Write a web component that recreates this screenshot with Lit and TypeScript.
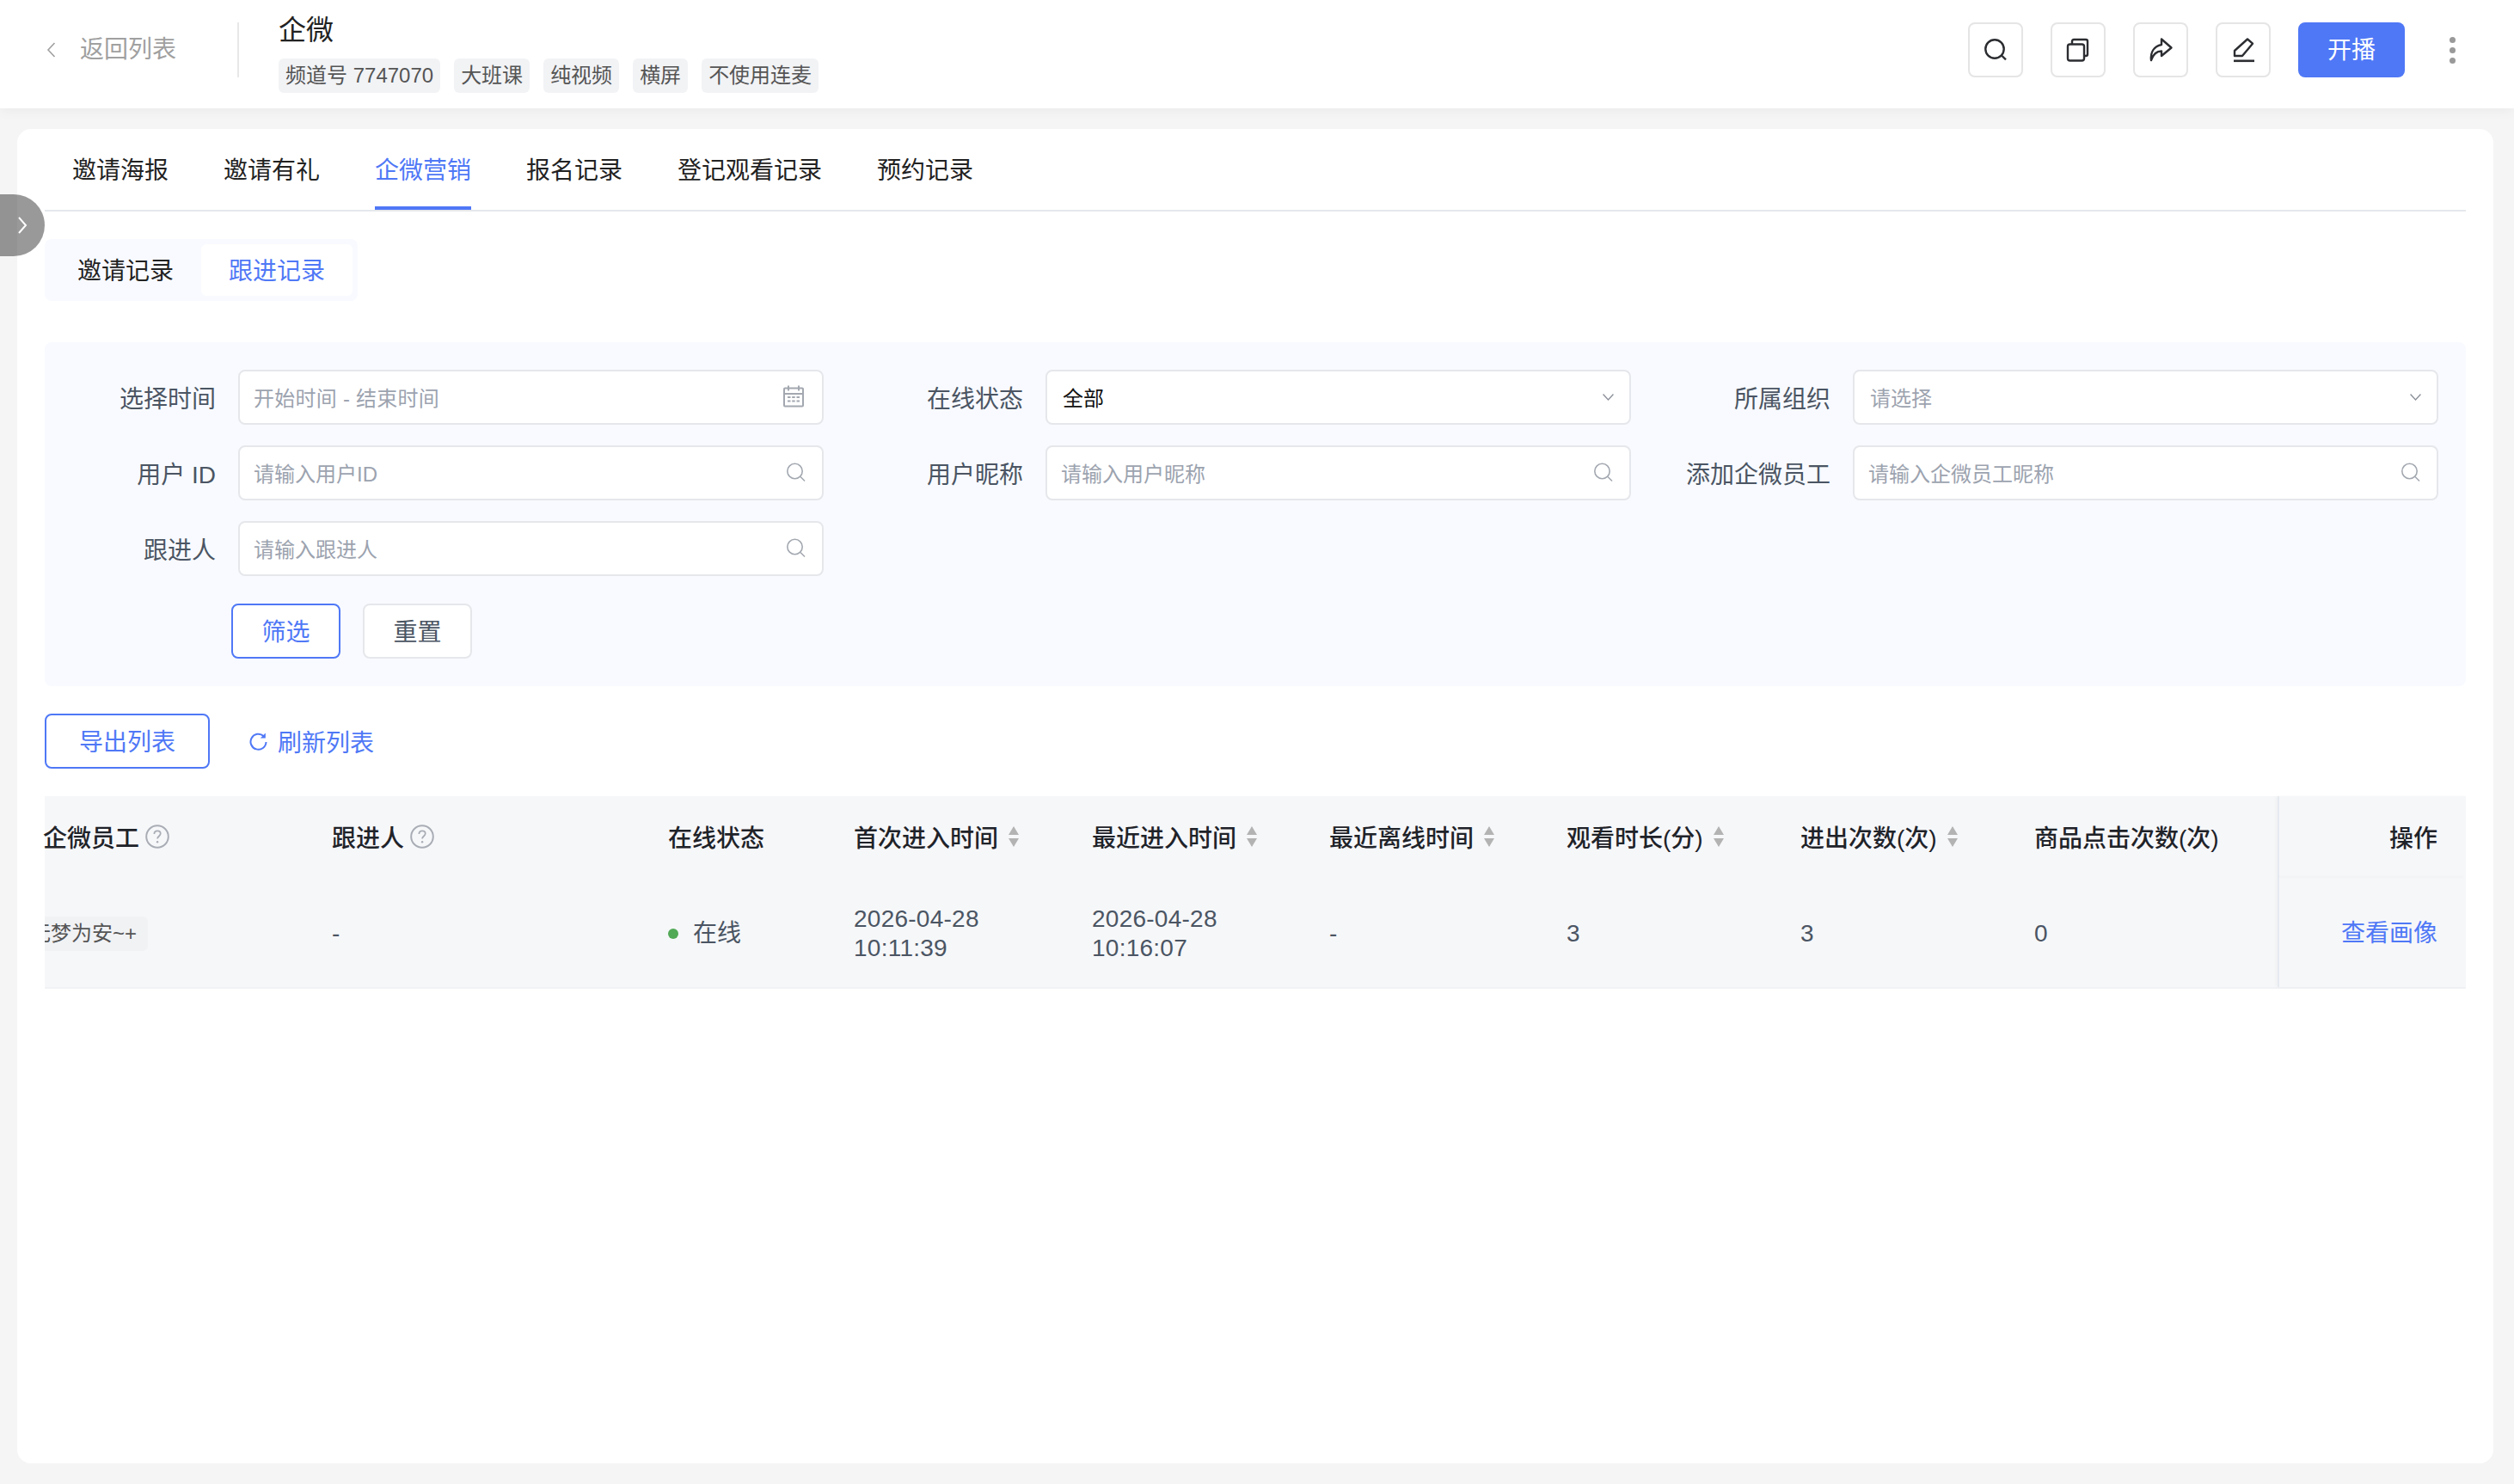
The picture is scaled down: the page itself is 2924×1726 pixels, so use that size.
import { css, html, LitElement, svg } from "lit";
import { customElement } from "lit/decorators.js";

const searchIcon = html`<svg class="field-icon" viewBox="0 0 24 24" fill="none" stroke="#a3a8b0" stroke-width="1.6"><circle cx="10.5" cy="11" r="8.7"></circle><path d="M17 17.5l5 5"></path></svg>`;
const chevronDown = html`<svg class="chevron" viewBox="0 0 20 20" fill="none" stroke="#8b9099" stroke-width="1.6"><path d="M3 6.5l7 7.5 7-7.5"></path></svg>`;
const calendarIcon = html`<svg class="field-icon date-icon" viewBox="0 0 24 26" fill="none" stroke="#a3a8b0" stroke-width="2"><rect x="1" y="3.5" width="22" height="21" rx="1"></rect><path d="M1 10h22M6 0.5v6M18 0.5v6"></path><path d="M5 14h3.5M10.2 14h3.5M15.5 14h3.5M5 18.5h3.5M10.2 18.5h3.5M15.5 18.5h3.5" stroke-width="1.8"></path></svg>`;
const helpIcon = html`<svg class="help" viewBox="0 0 28 28" fill="none"><circle cx="14" cy="14" r="12.8" stroke="#a9adb5" stroke-width="2"></circle><path d="M10.4 11c0-2.2 1.6-3.6 3.7-3.6s3.6 1.3 3.6 3.2c0 2.9-3.6 2.9-3.6 6" stroke="#a9adb5" stroke-width="1.8"></path><circle cx="14.1" cy="20.2" r="1.2" fill="#a9adb5"></circle></svg>`;
const sortIcon = html`<svg class="sort" viewBox="0 0 14 24" fill="#b3b3b3"><path d="M7 0l6 10H1zM7 24L1 14h12z"></path></svg>`;

const toolIcons = [
  svg`<circle cx="14" cy="14" r="10.7"></circle><path d="M22 21.5l5 4.8"></path>`,
  svg`<rect x="3" y="8.5" width="19" height="19" rx="2.5"></rect><path d="M8 8V5a2 2 0 0 1 2-2h14a2 2 0 0 1 2 2v15a2 2 0 0 1-2 2h-2"></path>`,
  svg`<path d="M4 27C3 18 7 11 16 9V2.5L27.5 12.5 16 22V16.5C10 16.5 6 21 4 27z" stroke-linejoin="round"></path>`,
  svg`<path d="M20 2.5l6 5.2L14 22H5v-6z" stroke-linejoin="round"></path><path d="M4 27.8h24" stroke-width="2.6"></path>`,
];

type Field = { label: string; placeholder?: string; value?: string; kind: "date" | "select" | "search" };

const fields: Field[] = [
  { label: "选择时间", placeholder: "开始时间 - 结束时间", kind: "date" },
  { label: "在线状态", value: "全部", kind: "select" },
  { label: "所属组织", placeholder: "请选择", kind: "select" },
  { label: "用户 ID", placeholder: "请输入用户ID", kind: "search" },
  { label: "用户昵称", placeholder: "请输入用户昵称", kind: "search" },
  { label: "添加企微员工", placeholder: "请输入企微员工昵称", kind: "search" },
  { label: "跟进人", placeholder: "请输入跟进人", kind: "search" },
];

const columns = [
  { title: "企微员工", help: true },
  { title: "跟进人", help: true },
  { title: "在线状态" },
  { title: "首次进入时间", sort: true },
  { title: "最近进入时间", sort: true },
  { title: "最近离线时间", sort: true },
  { title: "观看时长(分)", sort: true },
  { title: "进出次数(次)", sort: true },
  { title: "商品点击次数(次)" },
];

@customElement("app-root")
export class AppRoot extends LitElement {
  static styles = css`
    :host {
      display: flex;
      flex-direction: column;
      position: relative;
      height: 100vh;
      background: #f5f5f5;
      font-family: "Liberation Sans", "Noto Sans CJK SC", sans-serif;
      font-size: 28px;
      color: #4b5563;
      overflow: hidden;
    }

    * {
      box-sizing: border-box;
    }

    .topbar {
      position: relative;
      display: flex;
      align-items: center;
      flex: none;
      height: 126px;
      padding: 0 68px 0 54px;
      background: #fff;
      box-shadow: 0 2px 14px rgba(0, 0, 0, 0.05);
    }

    .back {
      display: flex;
      align-items: center;
      gap: 28px;
      margin-top: -10px;
      color: #a0a0a0;
      line-height: 40px;
    }

    .back svg {
      width: 11px;
      height: 20px;
    }

    .divider {
      width: 2px;
      height: 64px;
      margin: -10px 46px 0 71px;
      background: #e8e8e8;
    }

    .info {
      display: flex;
      flex-direction: column;
      gap: 10px;
      margin-top: -6px;
    }

    .title {
      font-size: 32px;
      line-height: 46px;
      color: #222;
    }

    .tags {
      display: flex;
      gap: 16px;
    }

    .tag {
      height: 40px;
      padding: 0 8px;
      border-radius: 6px;
      background: #f2f3f5;
      color: #555;
      font-size: 24px;
      line-height: 40px;
    }

    .actions {
      display: flex;
      align-items: center;
      gap: 32px;
      margin: -10px 0 0 auto;
    }

    .tool {
      display: flex;
      align-items: center;
      justify-content: center;
      width: 64px;
      height: 64px;
      border: 2px solid #e5e5e5;
      border-radius: 8px;
    }

    .tool svg {
      width: 30px;
      height: 30px;
      fill: none;
      stroke: #2b2d31;
      stroke-width: 2.4;
    }

    .start {
      width: 124px;
      height: 64px;
      border-radius: 8px;
      background: #4f78f6;
      color: #fff;
      text-align: center;
      line-height: 66px;
    }

    .more {
      display: flex;
      flex-direction: column;
      gap: 5px;
      margin-left: 20px;
    }

    .more i {
      width: 7px;
      height: 7px;
      border-radius: 50%;
      background: #999;
    }

    .toggle {
      position: absolute;
      left: 0;
      top: 226px;
      display: flex;
      align-items: center;
      justify-content: center;
      width: 52px;
      height: 72px;
      border-radius: 0 36px 36px 0;
      background: rgba(0, 0, 0, 0.4);
    }

    .toggle svg {
      width: 12px;
      height: 22px;
    }

    .main {
      flex: 1;
      padding: 24px 24px 24px 20px;
      min-height: 0;
    }

    .card {
      height: 100%;
      padding: 0 32px;
      border-radius: 16px;
      background: #fff;
    }

    .tabs {
      display: flex;
      gap: 64px;
      height: 96px;
      padding-left: 32px;
      border-bottom: 2px solid #e5e7eb;
    }

    .tabs span {
      height: 94px;
      color: #222;
      line-height: 98px;
    }

    .tabs .active {
      border-bottom: 4px solid #4f78f6;
      color: #4f78f6;
    }

    .subtabs {
      display: inline-flex;
      margin-top: 32px;
      padding: 6px;
      border-radius: 8px;
      background: #f8faff;
      vertical-align: top;
    }

    .subtabs span {
      width: 176px;
      height: 60px;
      border-radius: 6px;
      color: #222;
      text-align: center;
      line-height: 64px;
    }

    .subtabs .active {
      background: #fff;
      color: #4f78f6;
    }

    .filter {
      margin-top: 48px;
      padding: 32px 0;
      border-radius: 8px;
      background: #f8faff;
    }

    .fields {
      display: grid;
      grid-template-columns: repeat(3, 906px);
      gap: 24px 33px;
    }

    .field {
      display: grid;
      grid-template-columns: 199px 681px;
      gap: 26px;
      align-items: center;
    }

    .field label {
      text-align: right;
      white-space: nowrap;
      color: #4b5563;
    }

    .input {
      display: flex;
      align-items: center;
      justify-content: space-between;
      height: 64px;
      padding: 0 18px 2px 16px;
      border: 2px solid #e5e7eb;
      border-radius: 8px;
      background: #fff;
      font-size: 24px;
      color: #9ca3af;
    }

    .input.select {
      padding: 0 16px 2px 18px;
    }

    .input .value {
      color: #111;
    }

    .field-icon {
      width: 24px;
      height: 24px;
    }

    .date-icon {
      height: 26px;
      margin-right: 3px;
    }

    .chevron {
      width: 17px;
      height: 17px;
    }

    .buttons {
      display: flex;
      gap: 26px;
      margin: 32px 0 0 217px;
    }

    .btn {
      width: 127px;
      height: 64px;
      border: 2px solid #e5e7eb;
      border-radius: 8px;
      background: #fff;
      color: #4b5563;
      text-align: center;
      line-height: 63px;
    }

    .btn.primary {
      border-color: #4f78f6;
      color: #4f78f6;
    }

    .toolbar {
      display: flex;
      align-items: center;
      gap: 46px;
      margin-top: 32px;
    }

    .toolbar .btn {
      width: 192px;
    }

    .refresh {
      display: flex;
      align-items: center;
      gap: 11px;
      color: #4f78f6;
    }

    .refresh svg {
      width: 22px;
      height: 24px;
    }

    .table {
      display: grid;
      grid-template-columns: 334px 391px 216px 277px 276px 276px 272px 272px 283px 219px;
      margin-top: 32px;
      background: #f6f7f9;
      border-bottom: 2px solid #f1f2f5;
    }

    .th,
    .td {
      display: flex;
      align-items: center;
      min-width: 0;
      overflow: hidden;
    }

    .th {
      height: 94px;
      color: #1f2329;
      font-weight: 500;
      white-space: nowrap;
    }

    .th .sort {
      margin-left: 11px;
    }

    .th .help {
      margin-left: 7px;
    }

    .td {
      height: 128px;
      padding-top: 3px;
      line-height: 34px;
    }

    .th.first {
      margin-left: -2px;
    }

    .fixed {
      justify-content: flex-end;
      padding-right: 33px;
      border-left: 2px solid #e6eaf0;
      box-shadow: -2px 0 4px rgba(0, 0, 0, 0.03);
    }

    .date {
      letter-spacing: 0.25px;
    }

    .staff {
      flex: none;
      height: 40px;
      margin-left: -29px;
      padding: 0 13px 0 12px;
      border-radius: 6px;
      background: #f1f2f4;
      color: #555;
      font-size: 24px;
      line-height: 40px;
    }

    .online::before {
      content: "";
      width: 12px;
      height: 12px;
      margin-right: 17px;
      border-radius: 50%;
      background: #52a956;
    }

    .link {
      color: #4f78f6;
    }

    .help {
      width: 28px;
      height: 28px;
      flex: none;
    }

    .sort {
      width: 14px;
      height: 24px;
      flex: none;
    }
  `;

  renderField(f: Field) {
    let icon = searchIcon;
    if (f.kind == "date") icon = calendarIcon;
    if (f.kind == "select") icon = chevronDown;
    return html`
      <div class="field">
        <label>${f.label}</label>
        <div class="input ${f.kind}">
          <span class=${f.value ? "value" : ""}>${f.value ?? f.placeholder}</span>
          ${icon}
        </div>
      </div>
    `;
  }

  render() {
    return html`
      <header class="topbar">
        <div class="back">
          <svg viewBox="0 0 11 20" fill="none" stroke="#a0a0a0" stroke-width="1.6"><path d="M9.5 2L2 10l7.5 8"></path></svg>
          <span>返回列表</span>
        </div>
        <div class="divider"></div>
        <div class="info">
          <div class="title">企微</div>
          <div class="tags">
            ${["频道号 7747070", "大班课", "纯视频", "横屏", "不使用连麦"].map((t) => html`<span class="tag">${t}</span>`)}
          </div>
        </div>
        <div class="actions">
          ${toolIcons.map((i) => html`<div class="tool"><svg viewBox="0 0 30 30">${i}</svg></div>`)}
          <div class="start">开播</div>
          <div class="more"><i></i><i></i><i></i></div>
        </div>
      </header>

      <div class="toggle">
        <svg viewBox="0 0 12 22" fill="none" stroke="#fff" stroke-width="2"><path d="M2 2l8 9-8 9"></path></svg>
      </div>

      <main class="main">
        <div class="card">
          <div class="tabs">
            ${["邀请海报", "邀请有礼", "企微营销", "报名记录", "登记观看记录", "预约记录"].map(
              (t, i) => html`<span class=${i == 2 ? "active" : ""}>${t}</span>`
            )}
          </div>

          <div class="subtabs">
            <span>邀请记录</span>
            <span class="active">跟进记录</span>
          </div>

          <section class="filter">
            <div class="fields">${fields.map((f) => this.renderField(f))}</div>
            <div class="buttons">
              <div class="btn primary">筛选</div>
              <div class="btn">重置</div>
            </div>
          </section>

          <div class="toolbar">
            <div class="btn primary">导出列表</div>
            <div class="refresh">
              <svg viewBox="0 0 22 24" fill="none" stroke="#4f78f6" stroke-width="2"><path d="M16.5 6A9 9 0 1 0 19.5 13"></path><path d="M18.8 2.5v6h-6z" stroke="none" fill="#4f78f6"></path></svg>
              <span>刷新列表</span>
            </div>
          </div>

          <div class="table">
            ${columns.map(
              (c, i) => html`
                <div class="th ${i == 0 ? "first" : ""}">
                  <span>${c.title}</span>
                  ${c.help ? helpIcon : ""} ${c.sort ? sortIcon : ""}
                </div>
              `
            )}
            <div class="th fixed">操作</div>

            <div class="td"><span class="staff">无梦为安~+</span></div>
            <div class="td">-</div>
            <div class="td online">在线</div>
            <div class="td date"><span>2026-04-28<br />10:11:39</span></div>
            <div class="td date"><span>2026-04-28<br />10:16:07</span></div>
            <div class="td">-</div>
            <div class="td">3</div>
            <div class="td">3</div>
            <div class="td">0</div>
            <div class="td fixed link">查看画像</div>
          </div>
        </div>
      </main>
    `;
  }
}
